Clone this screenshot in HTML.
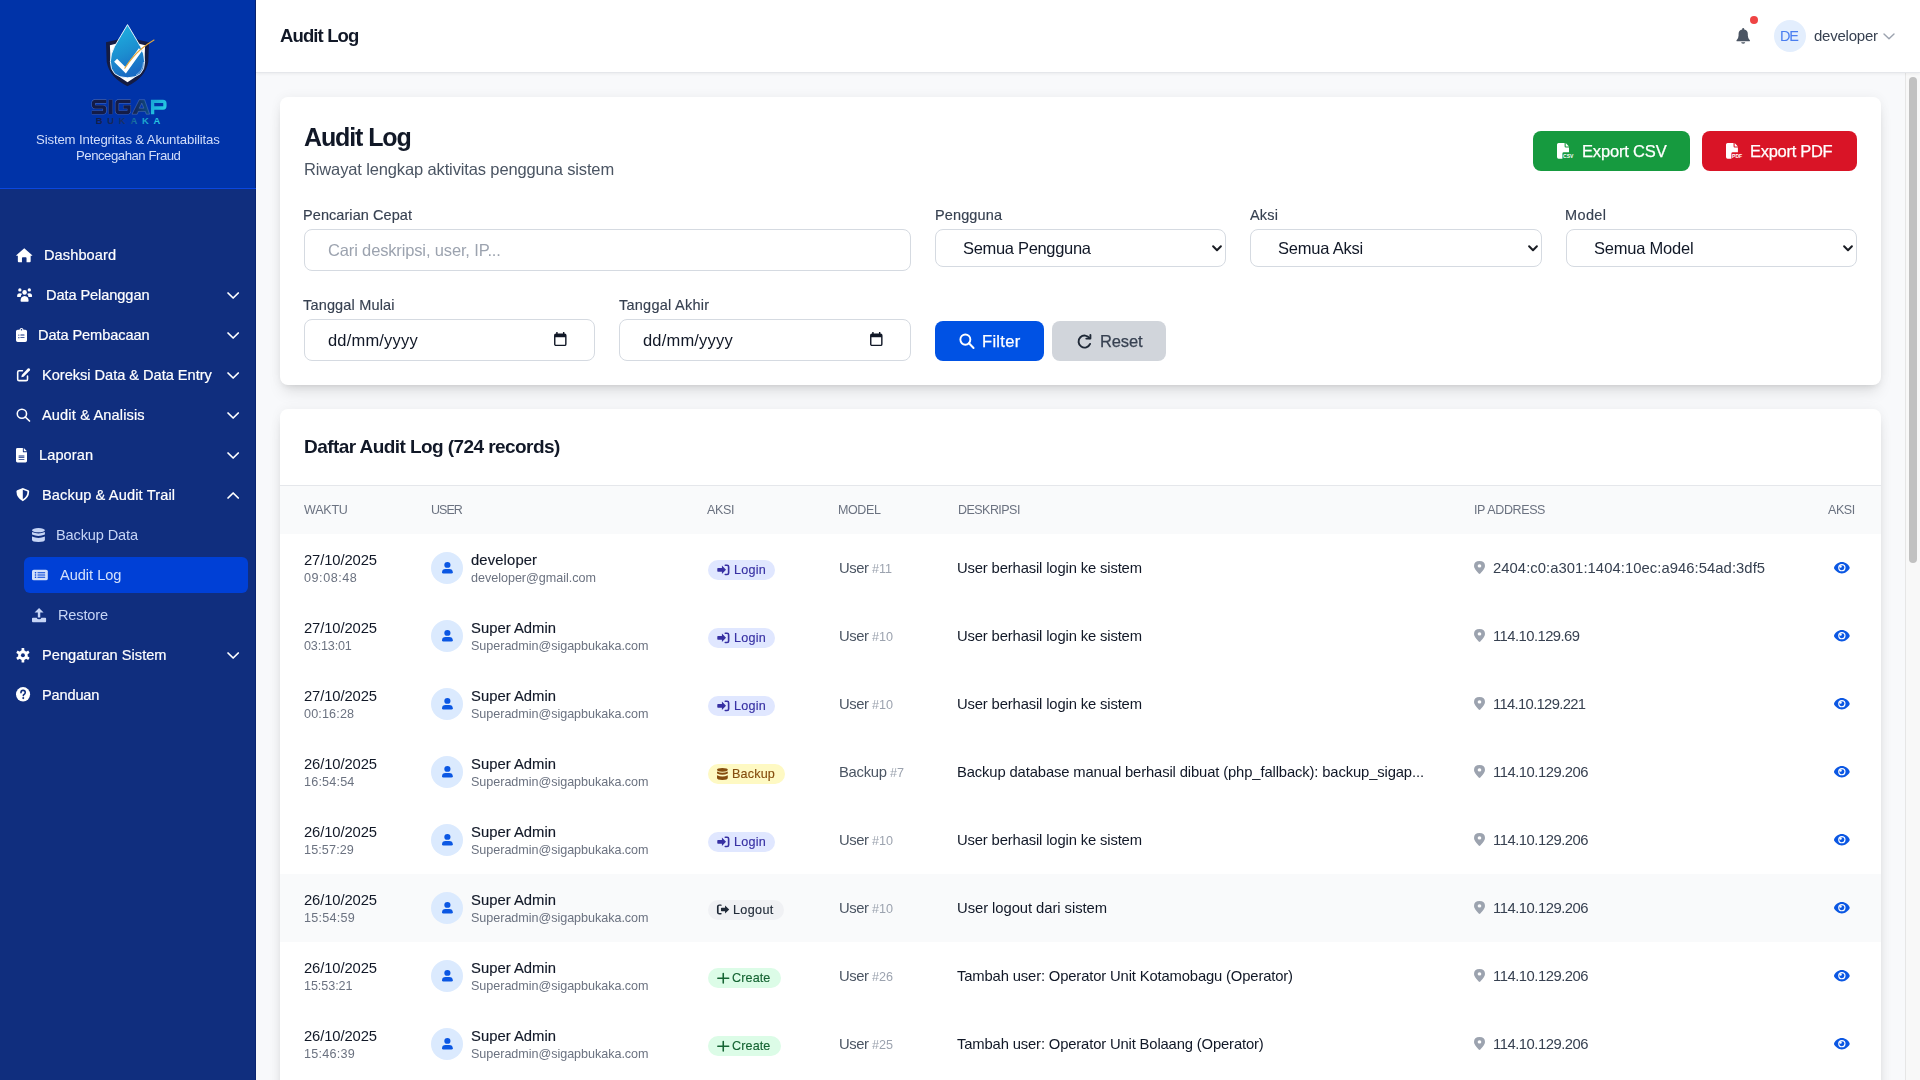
<!DOCTYPE html>
<html><head><meta charset="utf-8"><title>Audit Log</title><style>
html,body{margin:0;padding:0;width:1920px;height:1080px;overflow:hidden;background:#f6f7f9;}
body{position:relative;font-family:"Liberation Sans",sans-serif;}
.t{position:absolute;white-space:nowrap;line-height:1;will-change:transform;}
.r{position:absolute;}
.ic{position:absolute;overflow:visible;}
</style></head><body>
<div class=r style="left:256px;top:73px;width:1649px;height:1007px;background:#f8f9fb;"></div>
<div class=r style="left:0px;top:0px;width:256px;height:1080px;background:#102e7e;"></div>
<div class=r style="left:0px;top:0px;width:256px;height:188px;background:#0033a8;"></div>
<div class=r style="left:0px;top:188px;width:256px;height:1px;background:#0a47e0;z-index:1;"></div>
<div class=r style="left:255px;top:0px;width:1px;height:1080px;background:#0a2470;"></div>
<svg class=ic style="left:80px;top:15px;width:100px;height:115px" viewBox="80 15 100 115">
<defs>
<linearGradient id="dg" x1="0" y1="0" x2="0.3" y2="1"><stop offset="0" stop-color="#1fb6e2"/><stop offset="0.6" stop-color="#1c8fd0"/><stop offset="1" stop-color="#1a6cc4"/></linearGradient>
<linearGradient id="ag" x1="0" y1="0" x2="1" y2="0"><stop offset="0" stop-color="#152050"/><stop offset="1" stop-color="#0c4f8a"/></linearGradient>
<linearGradient id="pg" x1="0" y1="0" x2="1" y2="1"><stop offset="0" stop-color="#1aa8d6"/><stop offset="1" stop-color="#2ad2e6"/></linearGradient>
<linearGradient id="bg2" x1="0" y1="0" x2="1" y2="0"><stop offset="0" stop-color="#141c48"/><stop offset="0.45" stop-color="#17306a"/><stop offset="0.7" stop-color="#1a9cc8"/><stop offset="1" stop-color="#2ad0e8"/></linearGradient>
</defs>
<path d="M106 42.3 Q117 40.2 127.5 36.3 Q138 40.2 149 42.3 L148.3 62 Q145.5 77.5 127.5 86.2 Q109.5 77.5 106.7 62 Z" fill="#141c44"/>
<path d="M109.9 45.2 Q119 43.3 127.5 40.2 Q136 43.3 145.1 45.2 L144.5 61.6 Q142 74.5 127.5 82.2 Q113 74.5 110.5 61.6 Z" fill="#ffffff"/>
<path d="M127.5 24.6 Q134 35.5 140.5 46.5 Q144.6 54 144.6 61.5 Q144.6 77.8 127.5 77.8 Q110.4 77.8 110.4 61.5 Q110.4 54 114.5 46.5 Q121 35.5 127.5 24.6Z" fill="url(#dg)" stroke="#ffffff" stroke-width="0.9"/>
<path d="M136 75 Q143 71 143.5 62" fill="none" stroke="#e8f4ff" stroke-width="0.6" opacity="0.8"/>
<path d="M115.6 60.2 L125.6 70.2 L140.5 49.5" fill="none" stroke="#ffffff" stroke-width="4.2" stroke-linejoin="miter"/>
<path d="M124.8 68.2 Q132 57 140 50 Q147 44 154 40" fill="none" stroke="#e3a83c" stroke-width="1.1" stroke-linecap="round"/>
<g fill="none" stroke-width="3.3" stroke-linejoin="miter" stroke-linecap="butt">
<g stroke="#dfe8ff" stroke-width="4.1" opacity="0.35">
<path d="M106.3 101.4 L95.5 101.4 Q93.5 101.4 93.5 103.4 L93.5 105 Q93.5 107 95.5 107 L102.7 107 Q104.7 107 104.7 109 L104.7 110.5 Q104.7 112.5 102.7 112.5 L91.8 112.5"/>
<path d="M110.6 99.7 L110.6 114.2"/>
<path d="M130.6 101.4 L119 101.4 Q117 101.4 117 103.4 L117 110.5 Q117 112.5 119 112.5 L127 112.5 Q129 112.5 129 110.5 L129 107 L123.5 107"/>
</g>
<path stroke="#141c48" d="M106.3 101.4 L95.5 101.4 Q93.5 101.4 93.5 103.4 L93.5 105 Q93.5 107 95.5 107 L102.7 107 Q104.7 107 104.7 109 L104.7 110.5 Q104.7 112.5 102.7 112.5 L91.8 112.5"/>
<path stroke="#141c48" stroke-width="4" d="M110.6 99.7 L110.6 114.2"/>
<path stroke="#141c48" d="M130.6 101.4 L119 101.4 Q117 101.4 117 103.4 L117 110.5 Q117 112.5 119 112.5 L127 112.5 Q129 112.5 129 110.5 L129 107 L123.5 107"/>
</g><path fill="url(#ag)" fill-rule="evenodd" stroke="#c9d8ff" stroke-opacity="0.3" stroke-width="0.7" d="M132 114.2 L139.2 99.7 L144.6 99.7 L149.6 114.2 L146.2 114.2 L145.3 111.4 L138.3 111.4 L137.2 114.2 Z M139.3 108.2 L143.9 108.2 L141.8 103.2 Z"/><g fill="none" stroke-width="3.3" stroke-linejoin="miter" stroke-linecap="butt">
<path stroke="url(#pg)" d="M152.6 114.2 L152.6 101.4 L163 101.4 Q164.9 101.4 164.9 103.4 L164.9 106 Q164.9 108 163 108 L154.2 108"/>
</g>
<text x="128" y="124.2" font-family="Liberation Sans" font-weight="700" font-size="9.4" text-anchor="middle" fill="url(#bg2)" textLength="64.5" lengthAdjust="spacing">BUKAKA</text>
</svg>
<span class=t style="left:36.04px;top:133.40px;font-size:13.2px;color:#d2defa;letter-spacing:-0.140px;">Sistem Integritas &amp; Akuntabilitas</span>
<span class=t style="left:75.54px;top:148.90px;font-size:13.2px;color:#d2defa;letter-spacing:-0.484px;">Pencegahan Fraud</span>
<svg class=ic style="left:15.60px;top:247.80px;width:16.50px;height:14.50px;" viewBox="0 0 576 512" preserveAspectRatio="none"><path fill="#ffffff" d="M288 10 L566 255 Q575 268 560 278 L512 278 L512 470 Q512 502 480 502 L368 502 L368 360 Q368 330 338 330 L238 330 Q208 330 208 360 L208 502 L96 502 Q64 502 64 470 L64 278 L16 278 Q1 268 10 255 Z"/></svg>
<span class=t style="left:43.89px;top:247.70px;font-size:14.6px;color:#ffffff;letter-spacing:0.077px;-webkit-text-stroke:0.2px currentColor;">Dashboard</span>
<svg class=ic style="left:15.90px;top:287.90px;width:17.20px;height:14.00px;" viewBox="0 0 640 512" preserveAspectRatio="none"><g fill="#ffffff"><circle cx="144" cy="70" r="62"/><circle cx="496" cy="70" r="62"/><circle cx="320" cy="160" r="84"/><path d="M40 300 Q40 190 144 190 Q200 190 225 220 Q180 260 175 330 L60 330 Q40 330 40 300Z"/><path d="M600 300 Q600 190 496 190 Q440 190 415 220 Q460 260 465 330 L580 330 Q600 330 600 300Z"/><path d="M170 470 Q170 300 320 290 Q470 300 470 470 Q470 502 440 502 L200 502 Q170 502 170 470Z"/></g></svg>
<span class=t style="left:45.79px;top:287.70px;font-size:14.6px;color:#ffffff;letter-spacing:-0.088px;-webkit-text-stroke:0.2px currentColor;">Data Pelanggan</span>
<svg class=ic style="left:226.90px;top:291.50px;width:12.30px;height:7.00px;" viewBox="0 0 12 7" preserveAspectRatio="none"><path d="M1 1 L6 6 L11 1" fill="none" stroke="#ffffff" stroke-width="1.7" stroke-linecap="round" stroke-linejoin="round"/></svg>
<svg class=ic style="left:15.90px;top:328.00px;width:11.00px;height:13.90px;" viewBox="0 0 384 512" preserveAspectRatio="none"><path fill="#ffffff" d="M60 64 L120 64 Q130 0 192 0 Q254 0 264 64 L324 64 Q384 64 384 124 L384 452 Q384 512 324 512 L60 512 Q0 512 0 452 L0 124 Q0 64 60 64Z"/><g fill="#102e7e"><circle cx="192" cy="64" r="26"/><circle cx="100" cy="260" r="22"/><circle cx="100" cy="356" r="22"/><rect x="150" y="244" width="150" height="32" rx="14"/><rect x="150" y="340" width="150" height="32" rx="14"/></g></svg>
<span class=t style="left:38.49px;top:327.70px;font-size:14.6px;color:#ffffff;letter-spacing:-0.089px;-webkit-text-stroke:0.2px currentColor;">Data Pembacaan</span>
<svg class=ic style="left:226.90px;top:331.50px;width:12.30px;height:7.00px;" viewBox="0 0 12 7" preserveAspectRatio="none"><path d="M1 1 L6 6 L11 1" fill="none" stroke="#ffffff" stroke-width="1.7" stroke-linecap="round" stroke-linejoin="round"/></svg>
<svg class=ic style="left:15.60px;top:367.80px;width:14.40px;height:14.40px;" viewBox="0 0 512 512" preserveAspectRatio="none"><path fill="none" stroke="#ffffff" stroke-width="56" stroke-linecap="round" d="M230 100 L110 100 Q60 100 60 150 L60 400 Q60 450 110 450 L360 450 Q410 450 410 400 L410 290"/><path fill="#ffffff" d="M420 20 Q450 -5 480 20 L492 32 Q517 62 492 92 L270 314 L190 330 L206 250 Z"/></svg>
<span class=t style="left:41.99px;top:367.70px;font-size:14.6px;color:#ffffff;letter-spacing:-0.022px;-webkit-text-stroke:0.2px currentColor;">Koreksi Data &amp; Data Entry</span>
<svg class=ic style="left:226.90px;top:371.50px;width:12.30px;height:7.00px;" viewBox="0 0 12 7" preserveAspectRatio="none"><path d="M1 1 L6 6 L11 1" fill="none" stroke="#ffffff" stroke-width="1.7" stroke-linecap="round" stroke-linejoin="round"/></svg>
<svg class=ic style="left:15.60px;top:408.00px;width:14.40px;height:13.90px;" viewBox="0 0 512 512" preserveAspectRatio="none"><circle cx="210" cy="210" r="165" fill="none" stroke="#ffffff" stroke-width="56"/><path d="M330 330 L480 480" stroke="#ffffff" stroke-width="60" stroke-linecap="round"/></svg>
<span class=t style="left:42.29px;top:407.70px;font-size:14.6px;color:#ffffff;letter-spacing:0.135px;-webkit-text-stroke:0.2px currentColor;">Audit &amp; Analisis</span>
<svg class=ic style="left:226.90px;top:411.50px;width:12.30px;height:7.00px;" viewBox="0 0 12 7" preserveAspectRatio="none"><path d="M1 1 L6 6 L11 1" fill="none" stroke="#ffffff" stroke-width="1.7" stroke-linecap="round" stroke-linejoin="round"/></svg>
<svg class=ic style="left:15.90px;top:447.50px;width:11.00px;height:14.40px;" viewBox="0 0 384 512" preserveAspectRatio="none"><path fill="#ffffff" d="M50 0 L240 0 L240 130 Q240 150 260 150 L384 150 L384 462 Q384 512 334 512 L50 512 Q0 512 0 462 L0 50 Q0 0 50 0Z M272 0 L384 112 L272 112Z"/><g fill="#102e7e"><rect x="90" y="270" width="204" height="30" rx="10"/><rect x="90" y="330" width="204" height="30" rx="10"/><rect x="90" y="390" width="204" height="30" rx="10"/></g></svg>
<span class=t style="left:38.59px;top:447.70px;font-size:14.6px;color:#ffffff;letter-spacing:0.077px;-webkit-text-stroke:0.2px currentColor;">Laporan</span>
<svg class=ic style="left:226.90px;top:451.50px;width:12.30px;height:7.00px;" viewBox="0 0 12 7" preserveAspectRatio="none"><path d="M1 1 L6 6 L11 1" fill="none" stroke="#ffffff" stroke-width="1.7" stroke-linecap="round" stroke-linejoin="round"/></svg>
<svg class=ic style="left:16.25px;top:488.30px;width:13.65px;height:13.20px;" viewBox="0 0 512 512" preserveAspectRatio="none"><path fill="#ffffff" d="M256 0 L466 88 Q496 100 496 132 Q490 380 256 512 Q22 380 16 132 Q16 100 46 88Z"/><path fill="#102e7e" d="M256 64 L256 448 Q90 350 80 150 Z" opacity="0"/><path fill="#102e7e" d="M256 70 L430 140 Q425 340 256 440Z"/></svg>
<span class=t style="left:42.09px;top:487.70px;font-size:14.6px;color:#ffffff;letter-spacing:0.127px;-webkit-text-stroke:0.2px currentColor;">Backup &amp; Audit Trail</span>
<svg class=ic style="left:226.90px;top:491.50px;width:12.30px;height:7.00px;" viewBox="0 0 12 7" preserveAspectRatio="none"><path d="M1 6 L6 1 L11 6" fill="none" stroke="#ffffff" stroke-width="1.7" stroke-linecap="round" stroke-linejoin="round"/></svg>
<svg class=ic style="left:15.90px;top:647.80px;width:13.85px;height:14.50px;" viewBox="0 0 512 512" preserveAspectRatio="none"><g fill="#ffffff"><rect x="206" y="0" width="100" height="130" rx="20" transform="rotate(0 256 256)"/><rect x="206" y="0" width="100" height="130" rx="20" transform="rotate(60 256 256)"/><rect x="206" y="0" width="100" height="130" rx="20" transform="rotate(120 256 256)"/><rect x="206" y="0" width="100" height="130" rx="20" transform="rotate(180 256 256)"/><rect x="206" y="0" width="100" height="130" rx="20" transform="rotate(240 256 256)"/><rect x="206" y="0" width="100" height="130" rx="20" transform="rotate(300 256 256)"/><circle cx="256" cy="256" r="175"/></g><circle cx="256" cy="256" r="72" fill="#102e7e"/></svg>
<span class=t style="left:42.29px;top:647.70px;font-size:14.6px;color:#ffffff;letter-spacing:0.025px;-webkit-text-stroke:0.2px currentColor;">Pengaturan Sistem</span>
<svg class=ic style="left:226.90px;top:651.50px;width:12.30px;height:7.00px;" viewBox="0 0 12 7" preserveAspectRatio="none"><path d="M1 1 L6 6 L11 1" fill="none" stroke="#ffffff" stroke-width="1.7" stroke-linecap="round" stroke-linejoin="round"/></svg>
<svg class=ic style="left:15.90px;top:687.30px;width:14.10px;height:14.60px;" viewBox="0 0 512 512" preserveAspectRatio="none"><circle cx="256" cy="256" r="256" fill="#ffffff"/><path d="M180 200 Q180 120 256 120 Q336 120 336 196 Q336 240 290 262 Q266 274 266 300" fill="none" stroke="#102e7e" stroke-width="58" stroke-linecap="round"/><circle cx="264" cy="390" r="36" fill="#102e7e"/></svg>
<span class=t style="left:42.29px;top:687.70px;font-size:14.6px;color:#ffffff;letter-spacing:-0.169px;-webkit-text-stroke:0.2px currentColor;">Panduan</span>
<div class=r style="left:24px;top:557px;width:224px;height:36px;background:#0040d6;border-radius:6px;"></div>
<svg class=ic style="left:31.50px;top:527.90px;width:12.90px;height:13.90px;" viewBox="0 0 448 512" preserveAspectRatio="none"><g fill="#c6d5f6"><ellipse cx="224" cy="80" rx="224" ry="80"/><path d="M0 150 Q224 260 448 150 L448 240 Q224 350 0 240Z"/><path d="M0 310 Q224 420 448 310 L448 432 Q448 512 224 512 Q0 512 0 432Z"/></g></svg>
<span class=t style="left:55.99px;top:527.70px;font-size:14.6px;color:#c6d5f6;letter-spacing:-0.154px;">Backup Data</span>
<svg class=ic style="left:32.00px;top:568.60px;width:15.80px;height:12.10px;" viewBox="0 0 576 512" preserveAspectRatio="none"><rect x="0" y="32" width="576" height="448" rx="64" fill="#d3e0fb"/><g fill="#0040d6"><circle cx="128" cy="160" r="30"/><circle cx="128" cy="256" r="30"/><circle cx="128" cy="352" r="30"/><rect x="200" y="140" width="280" height="40" rx="10"/><rect x="200" y="236" width="280" height="40" rx="10"/><rect x="200" y="332" width="280" height="40" rx="10"/></g></svg>
<span class=t style="left:59.79px;top:567.70px;font-size:14.6px;color:#d3e0fb;letter-spacing:-0.031px;">Audit Log</span>
<svg class=ic style="left:32.00px;top:607.80px;width:14.10px;height:14.20px;" viewBox="0 0 512 512" preserveAspectRatio="none"><g fill="#c6d5f6"><path d="M256 0 L420 160 L300 160 L300 340 L212 340 L212 160 L92 160Z"/><path d="M0 380 Q0 352 32 352 L170 352 Q190 410 256 410 Q322 410 342 352 L480 352 Q512 352 512 380 L512 480 Q512 512 480 512 L32 512 Q0 512 0 480Z"/></g></svg>
<span class=t style="left:57.79px;top:607.70px;font-size:14.6px;color:#c6d5f6;letter-spacing:-0.181px;">Restore</span>
<div class=r style="left:256px;top:0px;width:1664px;height:72px;background:#ffffff;border-bottom:1px solid #e5e7eb;box-shadow:0 1px 3px rgba(0,0,0,0.06);z-index:2;"></div>
<span class=t style="left:280.35px;top:26.95px;font-size:18.5px;color:#111827;font-weight:700;letter-spacing:-0.877px;z-index:3;">Audit Log</span>
<svg class=ic style="z-index:3;left:1735.80px;top:28.00px;width:14.40px;height:15.80px;" viewBox="0 0 448 512" preserveAspectRatio="none"><path fill="#4b5563" d="M224 0 Q256 0 256 32 L256 52 Q368 74 368 196 L368 240 Q368 330 430 396 Q448 420 420 432 L28 432 Q0 420 18 396 Q80 330 80 240 L80 196 Q80 74 192 52 L192 32 Q192 0 224 0Z M160 464 L288 464 Q288 512 224 512 Q160 512 160 464Z"/></svg>
<div class=r style="left:1750px;top:15.9px;width:8px;height:7.999999999999998px;background:#ef4444;border-radius:50%;z-index:3;"></div>
<div class=r style="left:1774px;top:20px;width:32px;height:32px;background:#e3eefd;border-radius:50%;z-index:3;"></div>
<span class=t style="left:1780.49px;top:28.75px;font-size:14.5px;color:#4a7ef0;letter-spacing:-1.141px;z-index:3;">DE</span>
<span class=t style="left:1814.07px;top:28.10px;font-size:15px;color:#374151;letter-spacing:-0.230px;z-index:3;">developer</span>
<svg class=ic style="z-index:3;left:1883.00px;top:33.20px;width:12.00px;height:6.70px;" viewBox="0 0 12 7" preserveAspectRatio="none"><path d="M1 1 L6 6 L11 1" fill="none" stroke="#9ca3af" stroke-width="1.4" stroke-linecap="round" stroke-linejoin="round"/></svg>
<div class=r style="left:1905px;top:72px;width:15px;height:1008px;background:#f8f8f8;border-left:1px solid #e6e6e6;box-sizing:border-box;"></div>
<div class=r style="left:1909px;top:77px;width:8px;height:486px;background:#c1c1c1;border-radius:4px;"></div>
<div class=r style="left:280px;top:97px;width:1601px;height:288px;background:#fff;border-radius:8px;box-shadow:0 10px 15px -3px rgba(0,0,0,0.1),0 4px 6px -4px rgba(0,0,0,0.1),0 0 12px rgba(0,0,0,0.05);"></div>
<span class=t style="left:303.73px;top:125.00px;font-size:25px;color:#111827;font-weight:700;letter-spacing:-1.111px;">Audit Log</span>
<span class=t style="left:304.02px;top:160.95px;font-size:16.5px;color:#4b5563;letter-spacing:-0.134px;">Riwayat lengkap aktivitas pengguna sistem</span>
<div class=r style="left:1533px;top:131px;width:157px;height:40px;background:#169a3f;border-radius:8px;"></div>
<svg class=ic style="left:1557.00px;top:143.30px;width:16.30px;height:15.70px;" viewBox="0 0 16.3 15.7" preserveAspectRatio="none"><path fill="#ffffff" d="M1.6 0 L7.6 0 L7.6 3.2 Q7.6 4.4 8.8 4.4 L12 4.4 L12 9.3 L6.8 9.3 Q5.4 9.3 5.4 10.7 L5.4 15.7 L1.6 15.7 Q0 15.7 0 14.1 L0 1.6 Q0 0 1.6 0Z M8.7 0 L12 3.4 L8.7 3.4Z"/><text x="11.2" y="15.5" font-family="Liberation Sans" font-weight="700" font-size="6.2" text-anchor="middle" fill="#ffffff" textLength="10.3" lengthAdjust="spacingAndGlyphs">CSV</text></svg>
<span class=t style="left:1581.72px;top:142.75px;font-size:16.5px;color:#ffffff;letter-spacing:-0.172px;-webkit-text-stroke:0.25px currentColor;">Export CSV</span>
<div class=r style="left:1702px;top:131px;width:155px;height:40px;background:#d91426;border-radius:8px;"></div>
<svg class=ic style="left:1725.80px;top:143.30px;width:16.20px;height:15.70px;" viewBox="0 0 16.3 15.7" preserveAspectRatio="none"><path fill="#ffffff" d="M1.6 0 L7.6 0 L7.6 3.2 Q7.6 4.4 8.8 4.4 L12 4.4 L12 9.3 L6.8 9.3 Q5.4 9.3 5.4 10.7 L5.4 15.7 L1.6 15.7 Q0 15.7 0 14.1 L0 1.6 Q0 0 1.6 0Z M8.7 0 L12 3.4 L8.7 3.4Z"/><text x="11.2" y="15.5" font-family="Liberation Sans" font-weight="700" font-size="6.2" text-anchor="middle" fill="#ffffff" textLength="10.3" lengthAdjust="spacingAndGlyphs">PDF</text></svg>
<span class=t style="left:1750.42px;top:142.75px;font-size:16.5px;color:#ffffff;letter-spacing:-0.292px;-webkit-text-stroke:0.25px currentColor;">Export PDF</span>
<span class=t style="left:303.49px;top:208.05px;font-size:14.5px;color:#374151;letter-spacing:0.071px;-webkit-text-stroke:0.15px currentColor;">Pencarian Cepat</span>
<span class=t style="left:934.99px;top:208.05px;font-size:14.5px;color:#374151;letter-spacing:0.127px;-webkit-text-stroke:0.15px currentColor;">Pengguna</span>
<span class=t style="left:1250.19px;top:208.05px;font-size:14.5px;color:#374151;letter-spacing:0.203px;-webkit-text-stroke:0.15px currentColor;">Aksi</span>
<span class=t style="left:1565.49px;top:208.05px;font-size:14.5px;color:#374151;letter-spacing:0.379px;-webkit-text-stroke:0.15px currentColor;">Model</span>
<span class=t style="left:303.49px;top:297.75px;font-size:14.5px;color:#374151;letter-spacing:0.169px;-webkit-text-stroke:0.15px currentColor;">Tanggal Mulai</span>
<span class=t style="left:618.79px;top:297.75px;font-size:14.5px;color:#374151;letter-spacing:0.246px;-webkit-text-stroke:0.15px currentColor;">Tanggal Akhir</span>
<div class=r style="left:304px;top:229px;width:607px;height:42px;border:1px solid #d5dae1;box-sizing:border-box;border-radius:8px;background:#fff;"></div>
<span class=t style="left:328.42px;top:241.75px;font-size:16.5px;color:#9ca3af;letter-spacing:-0.147px;">Cari deskripsi, user, IP...</span>
<div class=r style="left:935px;top:229px;width:291px;height:38px;border:1px solid #d5dae1;box-sizing:border-box;border-radius:8px;background:#fff;"></div>
<span class=t style="left:963.42px;top:239.75px;font-size:16.5px;color:#111827;letter-spacing:-0.320px;">Semua Pengguna</span>
<svg class=ic style="left:1211.80px;top:244.60px;width:10.00px;height:7.00px;" viewBox="0 0 10 7" preserveAspectRatio="none"><path d="M1.1 1.3 L5 5.3 L8.9 1.3" fill="none" stroke="#1a1d24" stroke-width="2" stroke-linecap="round" stroke-linejoin="round"/></svg>
<div class=r style="left:1250px;top:229px;width:292px;height:38px;border:1px solid #d5dae1;box-sizing:border-box;border-radius:8px;background:#fff;"></div>
<span class=t style="left:1278.42px;top:239.75px;font-size:16.5px;color:#111827;letter-spacing:-0.219px;">Semua Aksi</span>
<svg class=ic style="left:1527.80px;top:244.60px;width:10.00px;height:7.00px;" viewBox="0 0 10 7" preserveAspectRatio="none"><path d="M1.1 1.3 L5 5.3 L8.9 1.3" fill="none" stroke="#1a1d24" stroke-width="2" stroke-linecap="round" stroke-linejoin="round"/></svg>
<div class=r style="left:1566px;top:229px;width:291px;height:38px;border:1px solid #d5dae1;box-sizing:border-box;border-radius:8px;background:#fff;"></div>
<span class=t style="left:1594.42px;top:239.75px;font-size:16.5px;color:#111827;letter-spacing:-0.226px;">Semua Model</span>
<svg class=ic style="left:1842.80px;top:244.60px;width:10.00px;height:7.00px;" viewBox="0 0 10 7" preserveAspectRatio="none"><path d="M1.1 1.3 L5 5.3 L8.9 1.3" fill="none" stroke="#1a1d24" stroke-width="2" stroke-linecap="round" stroke-linejoin="round"/></svg>
<div class=r style="left:304px;top:319px;width:291px;height:42px;border:1px solid #d5dae1;box-sizing:border-box;border-radius:8px;background:#fff;"></div>
<span class=t style="left:328.42px;top:331.75px;font-size:16.5px;color:#111827;letter-spacing:0.182px;">dd/mm/yyyy</span>
<svg class=ic style="left:553.70px;top:332.20px;width:12.60px;height:14.10px;" viewBox="0 0 12.5 14" preserveAspectRatio="none"><rect x="0.75" y="2.2" width="11" height="11.1" rx="1.2" fill="none" stroke="#111827" stroke-width="1.4"/><rect x="0.75" y="2.2" width="11" height="3" fill="#111827"/><rect x="2.2" y="0" width="1.4" height="3" fill="#111827"/><rect x="8.9" y="0" width="1.4" height="3" fill="#111827"/></svg>
<div class=r style="left:619px;top:319px;width:292px;height:42px;border:1px solid #d5dae1;box-sizing:border-box;border-radius:8px;background:#fff;"></div>
<span class=t style="left:643.42px;top:331.75px;font-size:16.5px;color:#111827;letter-spacing:0.182px;">dd/mm/yyyy</span>
<svg class=ic style="left:869.70px;top:332.20px;width:12.60px;height:14.10px;" viewBox="0 0 12.5 14" preserveAspectRatio="none"><rect x="0.75" y="2.2" width="11" height="11.1" rx="1.2" fill="none" stroke="#111827" stroke-width="1.4"/><rect x="0.75" y="2.2" width="11" height="3" fill="#111827"/><rect x="2.2" y="0" width="1.4" height="3" fill="#111827"/><rect x="8.9" y="0" width="1.4" height="3" fill="#111827"/></svg>
<div class=r style="left:935px;top:321px;width:109px;height:40px;background:#0052e4;border-radius:8px;"></div>
<svg class=ic style="left:958.80px;top:333.00px;width:15.50px;height:16.00px;" viewBox="0 0 512 512" preserveAspectRatio="none"><circle cx="210" cy="210" r="165" fill="none" stroke="#ffffff" stroke-width="62"/><path d="M330 330 L480 480" stroke="#ffffff" stroke-width="66" stroke-linecap="round"/></svg>
<span class=t style="left:982.42px;top:332.75px;font-size:16.5px;color:#ffffff;letter-spacing:0.297px;-webkit-text-stroke:0.25px currentColor;">Filter</span>
<div class=r style="left:1052px;top:321px;width:114px;height:40px;background:#d1d5db;border-radius:8px;"></div>
<svg class=ic style="left:1077.00px;top:334.00px;width:15.00px;height:14.00px;" viewBox="0 0 15 14" preserveAspectRatio="none"><path d="M12.6 4.3 A6 6 0 1 0 13.1 9.9" fill="none" stroke="#1f2937" stroke-width="1.9" stroke-linecap="round"/><path d="M9.3 4.6 L13.4 4.6 L13.4 0.9" fill="none" stroke="#1f2937" stroke-width="1.9" stroke-linecap="round" stroke-linejoin="round"/></svg>
<span class=t style="left:1100.42px;top:332.75px;font-size:16.5px;color:#374151;letter-spacing:-0.139px;-webkit-text-stroke:0.25px currentColor;">Reset</span>
<div class=r style="left:280px;top:409px;width:1601px;height:691px;background:#fff;border-radius:8px;box-shadow:0 10px 15px -3px rgba(0,0,0,0.1),0 4px 6px -4px rgba(0,0,0,0.1),0 0 12px rgba(0,0,0,0.05);"></div>
<span class=t style="left:303.83px;top:437.20px;font-size:19px;color:#111827;font-weight:700;letter-spacing:-0.566px;">Daftar Audit Log (724 records)</span>
<div class=r style="left:280px;top:485px;width:1601px;height:1px;background:#e5e7eb;"></div>
<div class=r style="left:280px;top:486px;width:1601px;height:48px;background:#f9fafb;"></div>
<span class=t style="left:304.06px;top:504.05px;font-size:12.5px;color:#6b7280;letter-spacing:-0.199px;">WAKTU</span>
<span class=t style="left:431.26px;top:504.05px;font-size:12.5px;color:#6b7280;letter-spacing:-0.953px;">USER</span>
<span class=t style="left:707.36px;top:504.05px;font-size:12.5px;color:#6b7280;letter-spacing:-0.375px;">AKSI</span>
<span class=t style="left:838.46px;top:504.05px;font-size:12.5px;color:#6b7280;letter-spacing:-0.395px;">MODEL</span>
<span class=t style="left:957.56px;top:504.05px;font-size:12.5px;color:#6b7280;letter-spacing:-0.539px;">DESKRIPSI</span>
<span class=t style="left:1474.26px;top:504.05px;font-size:12.5px;color:#6b7280;letter-spacing:-0.371px;">IP ADDRESS</span>
<span class=t style="left:1828.26px;top:504.05px;font-size:12.5px;color:#6b7280;letter-spacing:-0.442px;">AKSI</span>
<span class=t style="left:303.98px;top:552.60px;font-size:14.8px;color:#111827;letter-spacing:-0.114px;">27/10/2025</span>
<span class=t style="left:304.06px;top:572.10px;font-size:12.6px;color:#6b7280;letter-spacing:0.550px;">09:08:48</span>
<div class=r style="left:431px;top:552px;width:32px;height:32px;background:#dbeafe;border-radius:50%;"></div>
<svg class=ic style="left:441.70px;top:561.70px;width:10.80px;height:11.60px;" viewBox="0 0 448 512" preserveAspectRatio="none"><g fill="#0b57e3"><circle cx="224" cy="128" r="128"/><path d="M150 304 L298 304 Q448 304 448 454 Q448 512 390 512 L58 512 Q0 512 0 454 Q0 304 150 304Z"/></g></svg>
<span class=t style="left:471.18px;top:552.60px;font-size:14.8px;color:#111827;letter-spacing:0.130px;-webkit-text-stroke:0.15px currentColor;">developer</span>
<span class=t style="left:471.26px;top:571.90px;font-size:12.6px;color:#6b7280;letter-spacing:-0.033px;">developer@gmail.com</span>
<div class=r style="left:708px;top:560px;width:67px;height:20px;background:#e0e7ff;border-radius:10px;"></div>
<svg class=ic style="left:717.20px;top:563.80px;width:12.30px;height:11.70px;" viewBox="0 0 512 512" preserveAspectRatio="none"><g fill="#3730a3"><path d="M205 70 L375 256 L205 442 L205 336 L40 336 Q12 336 12 308 L12 204 Q12 176 40 176 L205 176Z"/><path d="M345 54 L420 54 Q484 54 484 118 L484 394 Q484 458 420 458 L345 458" fill="none" stroke="#3730a3" stroke-width="68" stroke-linecap="round"/></g></svg>
<span class=t style="left:733.66px;top:563.70px;font-size:12.6px;color:#3730a3;letter-spacing:0.263px;-webkit-text-stroke:0.15px currentColor;">Login</span>
<span class=t style="left:838.98px;top:560.60px;font-size:14.8px;color:#4b5563;letter-spacing:-0.405px;">User</span>
<span class=t style="left:872.36px;top:562.80px;font-size:12.6px;color:#9ca3af;">#11</span>
<span class=t style="left:957.48px;top:560.60px;font-size:14.8px;color:#111827;letter-spacing:-0.147px;">User berhasil login ke sistem</span>
<svg class=ic style="left:1474.20px;top:561.10px;width:11.00px;height:13.10px;" viewBox="0 0 384 512" preserveAspectRatio="none"><path fill="#9ca3af" d="M192 0 Q384 0 384 192 Q384 290 220 490 Q192 525 164 490 Q0 290 0 192 Q0 0 192 0Z"/><circle cx="192" cy="192" r="64" fill="#ffffff"/></svg>
<span class=t style="left:1492.78px;top:560.60px;font-size:14.8px;color:#374151;letter-spacing:0.060px;">2404:c0:a301:1404:10ec:a946:54ad:3df5</span>
<svg class=ic style="left:1833.70px;top:562.20px;width:15.70px;height:11.40px;" viewBox="0 0 576 420" preserveAspectRatio="none"><path fill="#0b57e3" d="M288 0 C420 0 520 90 570 180 Q582 210 570 240 C520 330 420 420 288 420 C156 420 56 330 6 240 Q-6 210 6 180 C56 90 156 0 288 0Z"/><circle cx="288" cy="210" r="135" fill="#ffffff"/><circle cx="288" cy="210" r="92" fill="#0b57e3"/><circle cx="240" cy="165" r="44" fill="#ffffff"/></svg>
<span class=t style="left:303.98px;top:620.60px;font-size:14.8px;color:#111827;letter-spacing:-0.114px;">27/10/2025</span>
<span class=t style="left:304.06px;top:640.10px;font-size:12.6px;color:#6b7280;letter-spacing:-0.164px;">03:13:01</span>
<div class=r style="left:431px;top:620px;width:32px;height:32px;background:#dbeafe;border-radius:50%;"></div>
<svg class=ic style="left:441.70px;top:629.70px;width:10.80px;height:11.60px;" viewBox="0 0 448 512" preserveAspectRatio="none"><g fill="#0b57e3"><circle cx="224" cy="128" r="128"/><path d="M150 304 L298 304 Q448 304 448 454 Q448 512 390 512 L58 512 Q0 512 0 454 Q0 304 150 304Z"/></g></svg>
<span class=t style="left:471.18px;top:620.60px;font-size:14.8px;color:#111827;letter-spacing:0.030px;-webkit-text-stroke:0.15px currentColor;">Super Admin</span>
<span class=t style="left:471.26px;top:639.90px;font-size:12.6px;color:#6b7280;letter-spacing:-0.045px;">Superadmin@sigapbukaka.com</span>
<div class=r style="left:708px;top:628px;width:67px;height:20px;background:#e0e7ff;border-radius:10px;"></div>
<svg class=ic style="left:717.20px;top:631.80px;width:12.30px;height:11.70px;" viewBox="0 0 512 512" preserveAspectRatio="none"><g fill="#3730a3"><path d="M205 70 L375 256 L205 442 L205 336 L40 336 Q12 336 12 308 L12 204 Q12 176 40 176 L205 176Z"/><path d="M345 54 L420 54 Q484 54 484 118 L484 394 Q484 458 420 458 L345 458" fill="none" stroke="#3730a3" stroke-width="68" stroke-linecap="round"/></g></svg>
<span class=t style="left:733.66px;top:631.70px;font-size:12.6px;color:#3730a3;letter-spacing:0.263px;-webkit-text-stroke:0.15px currentColor;">Login</span>
<span class=t style="left:838.98px;top:628.60px;font-size:14.8px;color:#4b5563;letter-spacing:-0.405px;">User</span>
<span class=t style="left:872.36px;top:630.80px;font-size:12.6px;color:#9ca3af;">#10</span>
<span class=t style="left:957.48px;top:628.60px;font-size:14.8px;color:#111827;letter-spacing:-0.147px;">User berhasil login ke sistem</span>
<svg class=ic style="left:1474.20px;top:629.10px;width:11.00px;height:13.10px;" viewBox="0 0 384 512" preserveAspectRatio="none"><path fill="#9ca3af" d="M192 0 Q384 0 384 192 Q384 290 220 490 Q192 525 164 490 Q0 290 0 192 Q0 0 192 0Z"/><circle cx="192" cy="192" r="64" fill="#ffffff"/></svg>
<span class=t style="left:1492.78px;top:628.60px;font-size:14.8px;color:#374151;letter-spacing:-0.541px;">114.10.129.69</span>
<svg class=ic style="left:1833.70px;top:630.20px;width:15.70px;height:11.40px;" viewBox="0 0 576 420" preserveAspectRatio="none"><path fill="#0b57e3" d="M288 0 C420 0 520 90 570 180 Q582 210 570 240 C520 330 420 420 288 420 C156 420 56 330 6 240 Q-6 210 6 180 C56 90 156 0 288 0Z"/><circle cx="288" cy="210" r="135" fill="#ffffff"/><circle cx="288" cy="210" r="92" fill="#0b57e3"/><circle cx="240" cy="165" r="44" fill="#ffffff"/></svg>
<span class=t style="left:303.98px;top:688.60px;font-size:14.8px;color:#111827;letter-spacing:-0.114px;">27/10/2025</span>
<span class=t style="left:304.06px;top:708.10px;font-size:12.6px;color:#6b7280;letter-spacing:0.150px;">00:16:28</span>
<div class=r style="left:431px;top:688px;width:32px;height:32px;background:#dbeafe;border-radius:50%;"></div>
<svg class=ic style="left:441.70px;top:697.70px;width:10.80px;height:11.60px;" viewBox="0 0 448 512" preserveAspectRatio="none"><g fill="#0b57e3"><circle cx="224" cy="128" r="128"/><path d="M150 304 L298 304 Q448 304 448 454 Q448 512 390 512 L58 512 Q0 512 0 454 Q0 304 150 304Z"/></g></svg>
<span class=t style="left:471.18px;top:688.60px;font-size:14.8px;color:#111827;letter-spacing:0.030px;-webkit-text-stroke:0.15px currentColor;">Super Admin</span>
<span class=t style="left:471.26px;top:707.90px;font-size:12.6px;color:#6b7280;letter-spacing:-0.045px;">Superadmin@sigapbukaka.com</span>
<div class=r style="left:708px;top:696px;width:67px;height:20px;background:#e0e7ff;border-radius:10px;"></div>
<svg class=ic style="left:717.20px;top:699.80px;width:12.30px;height:11.70px;" viewBox="0 0 512 512" preserveAspectRatio="none"><g fill="#3730a3"><path d="M205 70 L375 256 L205 442 L205 336 L40 336 Q12 336 12 308 L12 204 Q12 176 40 176 L205 176Z"/><path d="M345 54 L420 54 Q484 54 484 118 L484 394 Q484 458 420 458 L345 458" fill="none" stroke="#3730a3" stroke-width="68" stroke-linecap="round"/></g></svg>
<span class=t style="left:733.66px;top:699.70px;font-size:12.6px;color:#3730a3;letter-spacing:0.263px;-webkit-text-stroke:0.15px currentColor;">Login</span>
<span class=t style="left:838.98px;top:696.60px;font-size:14.8px;color:#4b5563;letter-spacing:-0.405px;">User</span>
<span class=t style="left:872.36px;top:698.80px;font-size:12.6px;color:#9ca3af;">#10</span>
<span class=t style="left:957.48px;top:696.60px;font-size:14.8px;color:#111827;letter-spacing:-0.147px;">User berhasil login ke sistem</span>
<svg class=ic style="left:1474.20px;top:697.10px;width:11.00px;height:13.10px;" viewBox="0 0 384 512" preserveAspectRatio="none"><path fill="#9ca3af" d="M192 0 Q384 0 384 192 Q384 290 220 490 Q192 525 164 490 Q0 290 0 192 Q0 0 192 0Z"/><circle cx="192" cy="192" r="64" fill="#ffffff"/></svg>
<span class=t style="left:1492.78px;top:696.60px;font-size:14.8px;color:#374151;letter-spacing:-0.672px;">114.10.129.221</span>
<svg class=ic style="left:1833.70px;top:698.20px;width:15.70px;height:11.40px;" viewBox="0 0 576 420" preserveAspectRatio="none"><path fill="#0b57e3" d="M288 0 C420 0 520 90 570 180 Q582 210 570 240 C520 330 420 420 288 420 C156 420 56 330 6 240 Q-6 210 6 180 C56 90 156 0 288 0Z"/><circle cx="288" cy="210" r="135" fill="#ffffff"/><circle cx="288" cy="210" r="92" fill="#0b57e3"/><circle cx="240" cy="165" r="44" fill="#ffffff"/></svg>
<span class=t style="left:303.98px;top:756.60px;font-size:14.8px;color:#111827;letter-spacing:-0.114px;">26/10/2025</span>
<span class=t style="left:304.06px;top:776.10px;font-size:12.6px;color:#6b7280;letter-spacing:0.193px;">16:54:54</span>
<div class=r style="left:431px;top:756px;width:32px;height:32px;background:#dbeafe;border-radius:50%;"></div>
<svg class=ic style="left:441.70px;top:765.70px;width:10.80px;height:11.60px;" viewBox="0 0 448 512" preserveAspectRatio="none"><g fill="#0b57e3"><circle cx="224" cy="128" r="128"/><path d="M150 304 L298 304 Q448 304 448 454 Q448 512 390 512 L58 512 Q0 512 0 454 Q0 304 150 304Z"/></g></svg>
<span class=t style="left:471.18px;top:756.60px;font-size:14.8px;color:#111827;letter-spacing:0.030px;-webkit-text-stroke:0.15px currentColor;">Super Admin</span>
<span class=t style="left:471.26px;top:775.90px;font-size:12.6px;color:#6b7280;letter-spacing:-0.045px;">Superadmin@sigapbukaka.com</span>
<div class=r style="left:708px;top:764px;width:77px;height:20px;background:#fef9c3;border-radius:10px;"></div>
<svg class=ic style="left:717.20px;top:767.70px;width:10.80px;height:11.90px;" viewBox="0 0 448 512" preserveAspectRatio="none"><g fill="#854d0e"><ellipse cx="224" cy="80" rx="224" ry="80"/><path d="M0 150 Q224 260 448 150 L448 240 Q224 350 0 240Z"/><path d="M0 310 Q224 420 448 310 L448 432 Q448 512 224 512 Q0 512 0 432Z"/></g></svg>
<span class=t style="left:732.36px;top:767.70px;font-size:12.6px;color:#854d0e;letter-spacing:0.173px;-webkit-text-stroke:0.15px currentColor;">Backup</span>
<span class=t style="left:838.98px;top:764.60px;font-size:14.8px;color:#4b5563;letter-spacing:-0.265px;">Backup</span>
<span class=t style="left:890.36px;top:766.80px;font-size:12.6px;color:#9ca3af;">#7</span>
<span class=t style="left:957.48px;top:764.60px;font-size:14.8px;color:#111827;letter-spacing:-0.134px;">Backup database manual berhasil dibuat (php_fallback): backup_sigap...</span>
<svg class=ic style="left:1474.20px;top:765.10px;width:11.00px;height:13.10px;" viewBox="0 0 384 512" preserveAspectRatio="none"><path fill="#9ca3af" d="M192 0 Q384 0 384 192 Q384 290 220 490 Q192 525 164 490 Q0 290 0 192 Q0 0 192 0Z"/><circle cx="192" cy="192" r="64" fill="#ffffff"/></svg>
<span class=t style="left:1492.78px;top:764.60px;font-size:14.8px;color:#374151;letter-spacing:-0.479px;">114.10.129.206</span>
<svg class=ic style="left:1833.70px;top:766.20px;width:15.70px;height:11.40px;" viewBox="0 0 576 420" preserveAspectRatio="none"><path fill="#0b57e3" d="M288 0 C420 0 520 90 570 180 Q582 210 570 240 C520 330 420 420 288 420 C156 420 56 330 6 240 Q-6 210 6 180 C56 90 156 0 288 0Z"/><circle cx="288" cy="210" r="135" fill="#ffffff"/><circle cx="288" cy="210" r="92" fill="#0b57e3"/><circle cx="240" cy="165" r="44" fill="#ffffff"/></svg>
<span class=t style="left:303.98px;top:824.60px;font-size:14.8px;color:#111827;letter-spacing:-0.114px;">26/10/2025</span>
<span class=t style="left:304.06px;top:844.10px;font-size:12.6px;color:#6b7280;letter-spacing:0.122px;">15:57:29</span>
<div class=r style="left:431px;top:824px;width:32px;height:32px;background:#dbeafe;border-radius:50%;"></div>
<svg class=ic style="left:441.70px;top:833.70px;width:10.80px;height:11.60px;" viewBox="0 0 448 512" preserveAspectRatio="none"><g fill="#0b57e3"><circle cx="224" cy="128" r="128"/><path d="M150 304 L298 304 Q448 304 448 454 Q448 512 390 512 L58 512 Q0 512 0 454 Q0 304 150 304Z"/></g></svg>
<span class=t style="left:471.18px;top:824.60px;font-size:14.8px;color:#111827;letter-spacing:0.030px;-webkit-text-stroke:0.15px currentColor;">Super Admin</span>
<span class=t style="left:471.26px;top:843.90px;font-size:12.6px;color:#6b7280;letter-spacing:-0.045px;">Superadmin@sigapbukaka.com</span>
<div class=r style="left:708px;top:832px;width:67px;height:20px;background:#e0e7ff;border-radius:10px;"></div>
<svg class=ic style="left:717.20px;top:835.80px;width:12.30px;height:11.70px;" viewBox="0 0 512 512" preserveAspectRatio="none"><g fill="#3730a3"><path d="M205 70 L375 256 L205 442 L205 336 L40 336 Q12 336 12 308 L12 204 Q12 176 40 176 L205 176Z"/><path d="M345 54 L420 54 Q484 54 484 118 L484 394 Q484 458 420 458 L345 458" fill="none" stroke="#3730a3" stroke-width="68" stroke-linecap="round"/></g></svg>
<span class=t style="left:733.66px;top:835.70px;font-size:12.6px;color:#3730a3;letter-spacing:0.263px;-webkit-text-stroke:0.15px currentColor;">Login</span>
<span class=t style="left:838.98px;top:832.60px;font-size:14.8px;color:#4b5563;letter-spacing:-0.405px;">User</span>
<span class=t style="left:872.36px;top:834.80px;font-size:12.6px;color:#9ca3af;">#10</span>
<span class=t style="left:957.48px;top:832.60px;font-size:14.8px;color:#111827;letter-spacing:-0.147px;">User berhasil login ke sistem</span>
<svg class=ic style="left:1474.20px;top:833.10px;width:11.00px;height:13.10px;" viewBox="0 0 384 512" preserveAspectRatio="none"><path fill="#9ca3af" d="M192 0 Q384 0 384 192 Q384 290 220 490 Q192 525 164 490 Q0 290 0 192 Q0 0 192 0Z"/><circle cx="192" cy="192" r="64" fill="#ffffff"/></svg>
<span class=t style="left:1492.78px;top:832.60px;font-size:14.8px;color:#374151;letter-spacing:-0.479px;">114.10.129.206</span>
<svg class=ic style="left:1833.70px;top:834.20px;width:15.70px;height:11.40px;" viewBox="0 0 576 420" preserveAspectRatio="none"><path fill="#0b57e3" d="M288 0 C420 0 520 90 570 180 Q582 210 570 240 C520 330 420 420 288 420 C156 420 56 330 6 240 Q-6 210 6 180 C56 90 156 0 288 0Z"/><circle cx="288" cy="210" r="135" fill="#ffffff"/><circle cx="288" cy="210" r="92" fill="#0b57e3"/><circle cx="240" cy="165" r="44" fill="#ffffff"/></svg>
<div class=r style="left:280px;top:874px;width:1601px;height:68px;background:#f9fafb;"></div>
<span class=t style="left:303.98px;top:892.60px;font-size:14.8px;color:#111827;letter-spacing:-0.114px;">26/10/2025</span>
<span class=t style="left:304.06px;top:912.10px;font-size:12.6px;color:#6b7280;letter-spacing:0.236px;">15:54:59</span>
<div class=r style="left:431px;top:892px;width:32px;height:32px;background:#dbeafe;border-radius:50%;"></div>
<svg class=ic style="left:441.70px;top:901.70px;width:10.80px;height:11.60px;" viewBox="0 0 448 512" preserveAspectRatio="none"><g fill="#0b57e3"><circle cx="224" cy="128" r="128"/><path d="M150 304 L298 304 Q448 304 448 454 Q448 512 390 512 L58 512 Q0 512 0 454 Q0 304 150 304Z"/></g></svg>
<span class=t style="left:471.18px;top:892.60px;font-size:14.8px;color:#111827;letter-spacing:0.030px;-webkit-text-stroke:0.15px currentColor;">Super Admin</span>
<span class=t style="left:471.26px;top:911.90px;font-size:12.6px;color:#6b7280;letter-spacing:-0.045px;">Superadmin@sigapbukaka.com</span>
<div class=r style="left:708px;top:900px;width:76px;height:20px;background:#f0f1f4;border-radius:10px;"></div>
<svg class=ic style="left:717.20px;top:904.10px;width:12.50px;height:10.90px;" viewBox="0 0 512 512" preserveAspectRatio="none"><g fill="#1f2937"><path d="M330 70 L500 256 L330 442 L330 336 L190 336 Q162 336 162 308 L162 204 Q162 176 190 176 L330 176Z"/><path d="M160 54 L96 54 Q32 54 32 118 L32 394 Q32 458 96 458 L160 458" fill="none" stroke="#1f2937" stroke-width="68" stroke-linecap="round"/></g></svg>
<span class=t style="left:733.46px;top:903.70px;font-size:12.6px;color:#1f2937;letter-spacing:0.370px;-webkit-text-stroke:0.15px currentColor;">Logout</span>
<span class=t style="left:838.98px;top:900.60px;font-size:14.8px;color:#4b5563;letter-spacing:-0.405px;">User</span>
<span class=t style="left:872.36px;top:902.80px;font-size:12.6px;color:#9ca3af;">#10</span>
<span class=t style="left:957.48px;top:900.60px;font-size:14.8px;color:#111827;letter-spacing:-0.059px;">User logout dari sistem</span>
<svg class=ic style="left:1474.20px;top:901.10px;width:11.00px;height:13.10px;" viewBox="0 0 384 512" preserveAspectRatio="none"><path fill="#9ca3af" d="M192 0 Q384 0 384 192 Q384 290 220 490 Q192 525 164 490 Q0 290 0 192 Q0 0 192 0Z"/><circle cx="192" cy="192" r="64" fill="#f9fafb"/></svg>
<span class=t style="left:1492.78px;top:900.60px;font-size:14.8px;color:#374151;letter-spacing:-0.479px;">114.10.129.206</span>
<svg class=ic style="left:1833.70px;top:902.20px;width:15.70px;height:11.40px;" viewBox="0 0 576 420" preserveAspectRatio="none"><path fill="#0b57e3" d="M288 0 C420 0 520 90 570 180 Q582 210 570 240 C520 330 420 420 288 420 C156 420 56 330 6 240 Q-6 210 6 180 C56 90 156 0 288 0Z"/><circle cx="288" cy="210" r="135" fill="#f9fafb"/><circle cx="288" cy="210" r="92" fill="#0b57e3"/><circle cx="240" cy="165" r="44" fill="#f9fafb"/></svg>
<span class=t style="left:303.98px;top:960.60px;font-size:14.8px;color:#111827;letter-spacing:-0.114px;">26/10/2025</span>
<span class=t style="left:304.06px;top:980.10px;font-size:12.6px;color:#6b7280;letter-spacing:-0.078px;">15:53:21</span>
<div class=r style="left:431px;top:960px;width:32px;height:32px;background:#dbeafe;border-radius:50%;"></div>
<svg class=ic style="left:441.70px;top:969.70px;width:10.80px;height:11.60px;" viewBox="0 0 448 512" preserveAspectRatio="none"><g fill="#0b57e3"><circle cx="224" cy="128" r="128"/><path d="M150 304 L298 304 Q448 304 448 454 Q448 512 390 512 L58 512 Q0 512 0 454 Q0 304 150 304Z"/></g></svg>
<span class=t style="left:471.18px;top:960.60px;font-size:14.8px;color:#111827;letter-spacing:0.030px;-webkit-text-stroke:0.15px currentColor;">Super Admin</span>
<span class=t style="left:471.26px;top:979.90px;font-size:12.6px;color:#6b7280;letter-spacing:-0.045px;">Superadmin@sigapbukaka.com</span>
<div class=r style="left:708px;top:968px;width:73px;height:20px;background:#dcfce7;border-radius:10px;"></div>
<svg class=ic style="left:716.50px;top:971.50px;width:12.50px;height:12.50px;" viewBox="0 0 448 512" preserveAspectRatio="none"><path d="M224 60 L224 452 M30 256 L418 256" stroke="#166534" stroke-width="56" stroke-linecap="round"/></svg>
<span class=t style="left:732.36px;top:971.70px;font-size:12.6px;color:#166534;letter-spacing:0.114px;-webkit-text-stroke:0.15px currentColor;">Create</span>
<span class=t style="left:838.98px;top:968.60px;font-size:14.8px;color:#4b5563;letter-spacing:-0.405px;">User</span>
<span class=t style="left:872.36px;top:970.80px;font-size:12.6px;color:#9ca3af;">#26</span>
<span class=t style="left:957.48px;top:968.60px;font-size:14.8px;color:#111827;letter-spacing:-0.148px;">Tambah user: Operator Unit Kotamobagu (Operator)</span>
<svg class=ic style="left:1474.20px;top:969.10px;width:11.00px;height:13.10px;" viewBox="0 0 384 512" preserveAspectRatio="none"><path fill="#9ca3af" d="M192 0 Q384 0 384 192 Q384 290 220 490 Q192 525 164 490 Q0 290 0 192 Q0 0 192 0Z"/><circle cx="192" cy="192" r="64" fill="#ffffff"/></svg>
<span class=t style="left:1492.78px;top:968.60px;font-size:14.8px;color:#374151;letter-spacing:-0.479px;">114.10.129.206</span>
<svg class=ic style="left:1833.70px;top:970.20px;width:15.70px;height:11.40px;" viewBox="0 0 576 420" preserveAspectRatio="none"><path fill="#0b57e3" d="M288 0 C420 0 520 90 570 180 Q582 210 570 240 C520 330 420 420 288 420 C156 420 56 330 6 240 Q-6 210 6 180 C56 90 156 0 288 0Z"/><circle cx="288" cy="210" r="135" fill="#ffffff"/><circle cx="288" cy="210" r="92" fill="#0b57e3"/><circle cx="240" cy="165" r="44" fill="#ffffff"/></svg>
<span class=t style="left:303.98px;top:1028.60px;font-size:14.8px;color:#111827;letter-spacing:-0.114px;">26/10/2025</span>
<span class=t style="left:304.06px;top:1048.10px;font-size:12.6px;color:#6b7280;letter-spacing:0.236px;">15:46:39</span>
<div class=r style="left:431px;top:1028px;width:32px;height:32px;background:#dbeafe;border-radius:50%;"></div>
<svg class=ic style="left:441.70px;top:1037.70px;width:10.80px;height:11.60px;" viewBox="0 0 448 512" preserveAspectRatio="none"><g fill="#0b57e3"><circle cx="224" cy="128" r="128"/><path d="M150 304 L298 304 Q448 304 448 454 Q448 512 390 512 L58 512 Q0 512 0 454 Q0 304 150 304Z"/></g></svg>
<span class=t style="left:471.18px;top:1028.60px;font-size:14.8px;color:#111827;letter-spacing:0.030px;-webkit-text-stroke:0.15px currentColor;">Super Admin</span>
<span class=t style="left:471.26px;top:1047.90px;font-size:12.6px;color:#6b7280;letter-spacing:-0.045px;">Superadmin@sigapbukaka.com</span>
<div class=r style="left:708px;top:1036px;width:73px;height:20px;background:#dcfce7;border-radius:10px;"></div>
<svg class=ic style="left:716.50px;top:1039.50px;width:12.50px;height:12.50px;" viewBox="0 0 448 512" preserveAspectRatio="none"><path d="M224 60 L224 452 M30 256 L418 256" stroke="#166534" stroke-width="56" stroke-linecap="round"/></svg>
<span class=t style="left:732.36px;top:1039.70px;font-size:12.6px;color:#166534;letter-spacing:0.114px;-webkit-text-stroke:0.15px currentColor;">Create</span>
<span class=t style="left:838.98px;top:1036.60px;font-size:14.8px;color:#4b5563;letter-spacing:-0.405px;">User</span>
<span class=t style="left:872.36px;top:1038.80px;font-size:12.6px;color:#9ca3af;">#25</span>
<span class=t style="left:957.48px;top:1036.60px;font-size:14.8px;color:#111827;letter-spacing:-0.151px;">Tambah user: Operator Unit Bolaang (Operator)</span>
<svg class=ic style="left:1474.20px;top:1037.10px;width:11.00px;height:13.10px;" viewBox="0 0 384 512" preserveAspectRatio="none"><path fill="#9ca3af" d="M192 0 Q384 0 384 192 Q384 290 220 490 Q192 525 164 490 Q0 290 0 192 Q0 0 192 0Z"/><circle cx="192" cy="192" r="64" fill="#ffffff"/></svg>
<span class=t style="left:1492.78px;top:1036.60px;font-size:14.8px;color:#374151;letter-spacing:-0.479px;">114.10.129.206</span>
<svg class=ic style="left:1833.70px;top:1038.20px;width:15.70px;height:11.40px;" viewBox="0 0 576 420" preserveAspectRatio="none"><path fill="#0b57e3" d="M288 0 C420 0 520 90 570 180 Q582 210 570 240 C520 330 420 420 288 420 C156 420 56 330 6 240 Q-6 210 6 180 C56 90 156 0 288 0Z"/><circle cx="288" cy="210" r="135" fill="#ffffff"/><circle cx="288" cy="210" r="92" fill="#0b57e3"/><circle cx="240" cy="165" r="44" fill="#ffffff"/></svg>
</body></html>
